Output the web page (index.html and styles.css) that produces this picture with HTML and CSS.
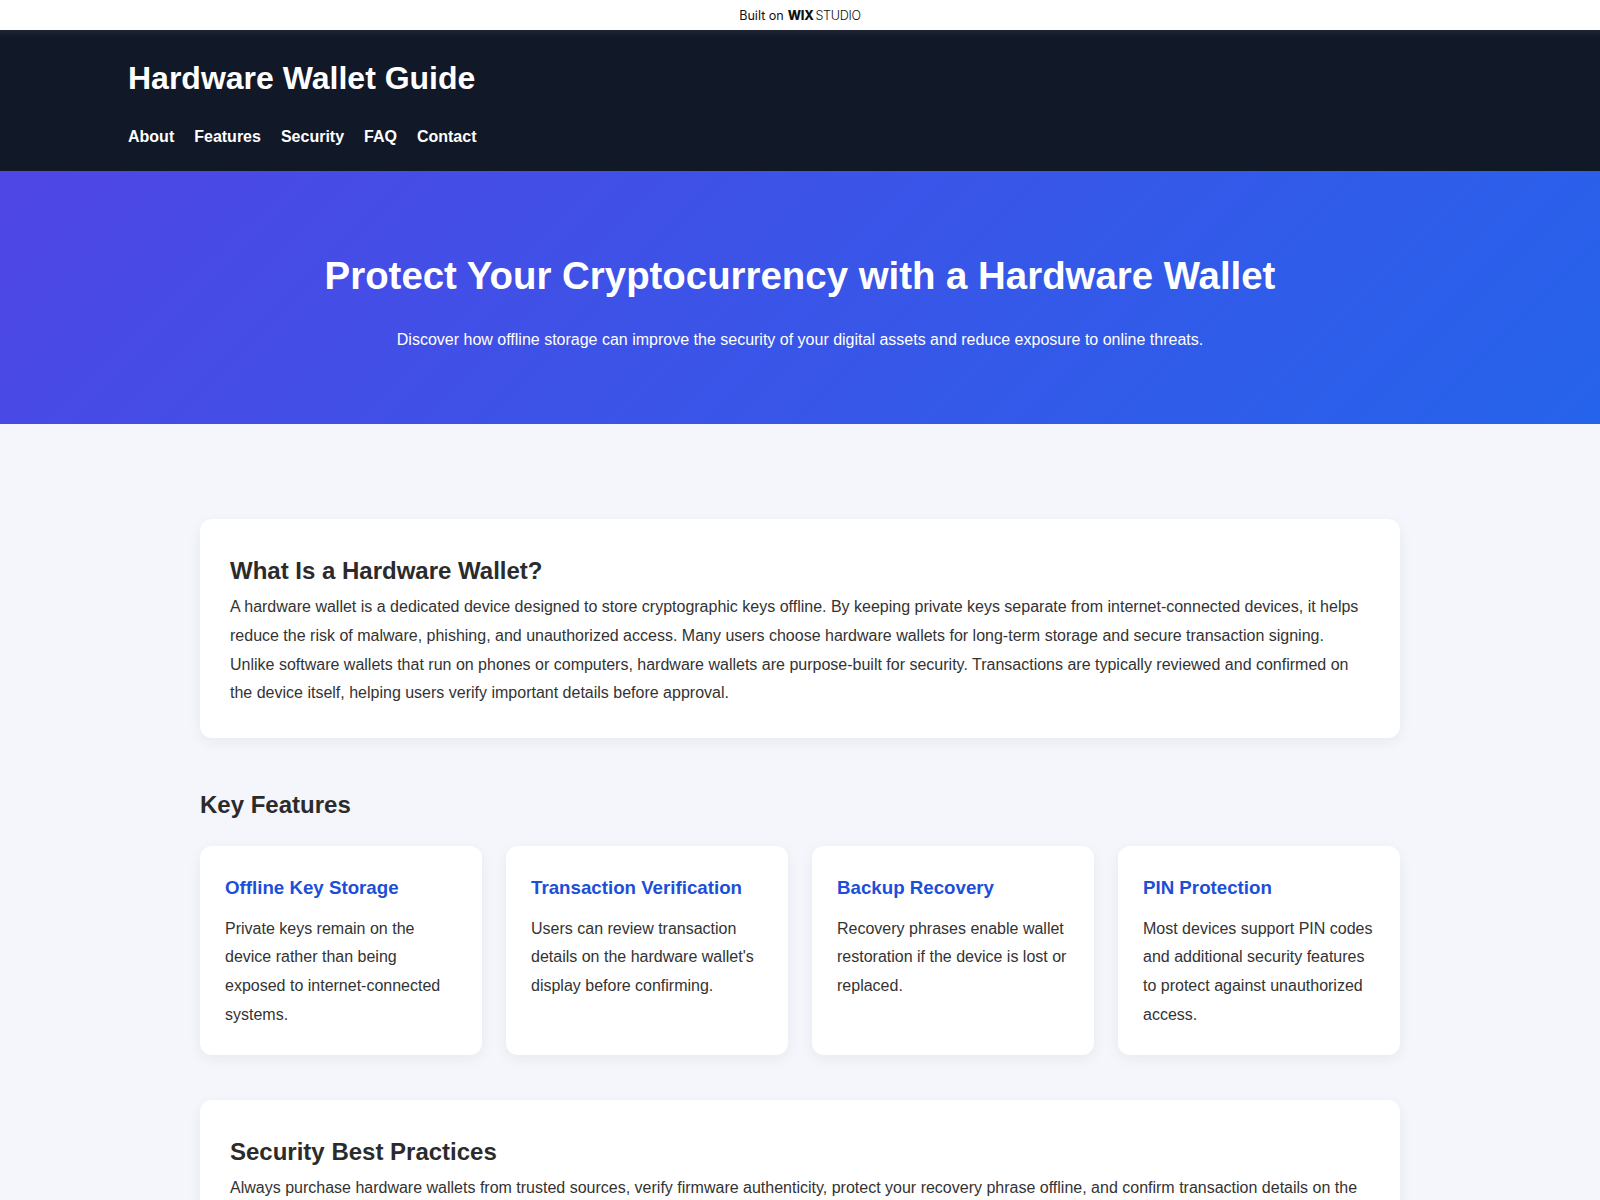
FILE: index.html
```html
<!DOCTYPE html>
<html lang="en">
<head>
<meta charset="utf-8">
<title>Hardware Wallet Guide</title>
<link rel="stylesheet" href="styles.css">
</head>
<body>
<div class="wixbar">
  <span class="built">Built on</span><span class="wix">WIX</span><span class="studio">STUDIO</span>
</div>
<header class="site-header">
  <h1 class="site-title">Hardware Wallet Guide</h1>
  <nav class="nav">
    <a href="#">About</a>
    <a href="#">Features</a>
    <a href="#">Security</a>
    <a href="#">FAQ</a>
    <a href="#">Contact</a>
  </nav>
</header>
<section class="hero">
  <h2 class="hero-title">Protect Your Cryptocurrency with a Hardware Wallet</h2>
  <p class="hero-sub">Discover how offline storage can improve the security of your digital assets and reduce exposure to online threats.</p>
</section>
<main class="main">
  <section class="card">
    <h2 class="card-title">What Is a Hardware Wallet?</h2>
    <p class="card-text">A hardware wallet is a dedicated device designed to store cryptographic keys offline. By keeping private keys separate from internet-connected devices, it helps reduce the risk of malware, phishing, and unauthorized access. Many users choose hardware wallets for long-term storage and secure transaction signing. Unlike software wallets that run on phones or computers, hardware wallets are purpose-built for security. Transactions are typically reviewed and confirmed on the device itself, helping users verify important details before approval.</p>
  </section>
  <section class="features">
    <h2 class="section-title">Key Features</h2>
    <div class="feature-grid">
      <div class="feature">
        <h3 class="feature-title">Offline Key Storage</h3>
        <p class="feature-text">Private keys remain on the device rather than being exposed to internet-connected systems.</p>
      </div>
      <div class="feature">
        <h3 class="feature-title">Transaction Verification</h3>
        <p class="feature-text">Users can review transaction details on the hardware wallet's display before confirming.</p>
      </div>
      <div class="feature">
        <h3 class="feature-title">Backup Recovery</h3>
        <p class="feature-text">Recovery phrases enable wallet restoration if the device is lost or replaced.</p>
      </div>
      <div class="feature">
        <h3 class="feature-title">PIN Protection</h3>
        <p class="feature-text">Most devices support PIN codes and additional security features to protect against unauthorized access.</p>
      </div>
    </div>
  </section>
  <section class="card">
    <h2 class="card-title">Security Best Practices</h2>
    <p class="card-text">Always purchase hardware wallets from trusted sources, verify firmware authenticity, protect your recovery phrase offline, and confirm transaction details on the device screen before approving any transfer. Keep your firmware updated and never share your recovery phrase with anyone.</p>
  </section>
</main>
</body>
</html>
```

FILE: styles.css
```css
* { box-sizing: border-box; }

html, body {
  margin: 0;
  padding: 0;
}

body {
  background: #f4f6fb;
  color: #333333;
  font-family: "Liberation Sans", Arial, sans-serif;
}

.wixbar {
  height: 30px;
  background: #ffffff;
  display: flex;
  align-items: center;
  justify-content: center;
  font-family: Inter, "Liberation Sans", sans-serif;
  font-size: 12.6px;
  color: #111;
  position: relative;
  z-index: 2;
}

.wixbar .built { margin-right: 4px; }
.wixbar .wix { font-weight: 800; letter-spacing: -0.3px; margin-right: 2px; }
.wixbar .studio { font-weight: 300; letter-spacing: -0.3px; }

.site-header {
  background: linear-gradient(#1f2535 0px, #111827 8px, #111827 100%);
  color: #ffffff;
  padding: 30px 128px 25px;
}

.site-title {
  margin: 0 0 31px;
  font-size: 32px;
  line-height: 37px;
  font-weight: 700;
}

.nav {
  display: flex;
  gap: 20px;
}

.nav a {
  color: #ffffff;
  text-decoration: none;
  font-weight: 700;
  font-size: 16px;
  line-height: 18px;
}

.hero {
  background: linear-gradient(135deg, #4f46e5 0%, #2563eb 100%);
  color: #ffffff;
  text-align: center;
  padding: 83px 20px 0;
  height: 253px;
}

.hero-title {
  margin: 0 0 33px;
  font-size: 38.4px;
  line-height: 44px;
  font-weight: 700;
}

.hero-sub {
  margin: 0;
  font-size: 16px;
  line-height: 18px;
}

.main {
  max-width: 1200px;
  margin: 0 auto;
  padding: 95px 0 60px;
}

.card {
  background: #ffffff;
  border-radius: 12px;
  box-shadow: 0 4px 14px rgba(30, 41, 80, 0.06);
  padding: 38px 30px 30px;
}

.card-title {
  margin: 0 0 8px;
  font-size: 24px;
  line-height: 28px;
  font-weight: 700;
  color: #2b2b2b;
}

.card-text {
  margin: 0;
  font-size: 16px;
  line-height: 28.8px;
  color: #333333;
}

.features {
  margin: 53px 0 45px;
}

.section-title {
  margin: 0 0 27px;
  font-size: 24px;
  line-height: 28px;
  font-weight: 700;
  color: #2b2b2b;
}

.feature-grid {
  display: grid;
  grid-template-columns: repeat(4, 1fr);
  gap: 24px;
}

.feature {
  background: #ffffff;
  border-radius: 12px;
  box-shadow: 0 4px 14px rgba(30, 41, 80, 0.06);
  padding: 31px 25px 25px;
  min-height: 209px;
}

.feature-title {
  margin: 0 0 16px;
  font-size: 18.72px;
  line-height: 21.5px;
  font-weight: 700;
  color: #1d4ed8;
}

.feature-text {
  margin: 0;
  font-size: 16px;
  line-height: 28.8px;
  color: #333333;
}
```
